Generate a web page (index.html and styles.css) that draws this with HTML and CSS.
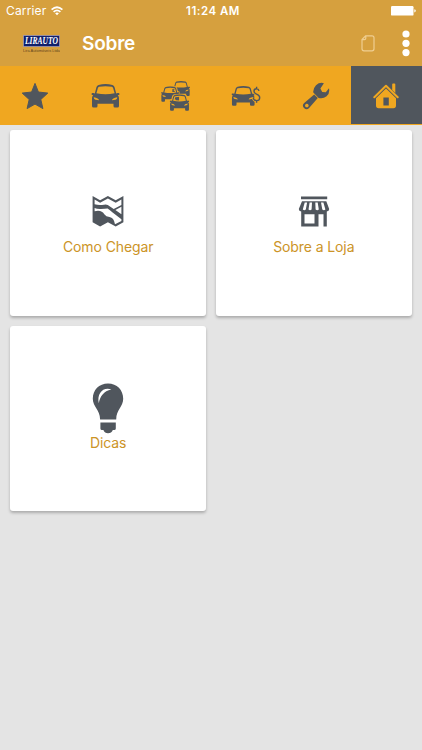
FILE: index.html
```html
<!DOCTYPE html>
<html lang="pt-BR">
<head>
<meta charset="utf-8">
<title>Sobre</title>
<link rel="stylesheet" href="styles.css">
</head>
<body>
<header class="header">
  <div class="status">
    <div class="carrier"><span class="carrier-name">Carrier</span>
      <svg class="wifi" width="12" height="10" viewBox="0 0 12 10" fill="none" stroke="#fff" stroke-width="1.7"><path d="M.6 3.7Q6-1.2 11.4 3.7M2.6 5.9Q6 2.8 9.4 5.9"/><path d="M4.1 7.3Q6 5.6 7.9 7.3L6 9.3z" fill="#fff" stroke="none"/></svg>
    </div>
    <span class="clock">11:24 AM</span>
    <div class="battery-wrap"><svg width="25" height="10" viewBox="0 0 25 10" fill="#fff"><rect width="22.5" height="9.6" rx="1.2"/><path d="M23.3 3.2q1.5.3 1.5 1.6t-1.5 1.6z"/></svg></div>
  </div>
  <div class="toolbar">
    <div class="logo"><svg class="logo-name" width="37" height="12" viewBox="0 0 37 12"><rect x=".4" y=".4" width="36.2" height="11.2" fill="#10206c" stroke="#a39bb0" stroke-width=".8"/><text x="2" y="9.3" textLength="33" lengthAdjust="spacingAndGlyphs">LIRAUTO</text></svg>
      <svg class="logo-sub" width="37" height="5" viewBox="0 0 37 5"><text x="0" y="4" textLength="37" lengthAdjust="spacingAndGlyphs">Lira Automóveis Ltda</text></svg>
    </div>
    <h1 class="title">Sobre</h1>
    <svg class="doc" width="14" height="17" viewBox="0 0 14 17" fill="none" stroke="#efce91" stroke-width="1.2"><path d="M4.6.8H11q2 0 2 2v11q0 2-2 2H3q-2 0-2-2V4.6zM4.8 1v2.2q0 1.4-1.4 1.4H1.2"/></svg>
    <svg class="dots" width="8" height="28" viewBox="0 0 8 28" fill="#fff"><circle cx="4" cy="4" r="3.6"/><circle cx="4" cy="13.3" r="3.6"/><circle cx="4" cy="22.6" r="3.6"/></svg>
  </div>
</header>

<svg class="defs" width="0" height="0">
  <symbol id="car" viewBox="0 0 28 24">
    <path fill-rule="evenodd" d="M7.1.9Q14-.7 20.9.9Q22.4 1.4 23 3L24.7 9.4Q25.2 8.8 27.2 9.1Q28.4 9.6 27.8 10.7L26.3 11.3Q27.5 12.4 27.5 14V22Q27.5 23.5 26 23.5H23.4Q22 23.5 22 22V19.8H6V22Q6 23.5 4.6 23.5H2Q.5 23.5.5 22V14Q.5 12.4 1.7 11.3L.2 10.7Q-.4 9.6.8 9.1Q2.8 8.8 3.3 9.4L5 3Q5.6 1.4 7.1.9zM7.6 2.8Q6.7 3 6.4 4L4.9 9.3Q14 11.2 23.1 9.3L21.6 4Q21.3 3 20.4 2.8Q14 1.5 7.6 2.8zM2.3 13.2Q2.2 15.5 4 15.7L7.5 16.2Q7.3 14.2 2.3 13.2zM25.7 13.2Q20.7 14.2 20.5 16.2L24 15.7Q25.8 15.5 25.7 13.2z"/>
  </symbol>
</svg>

<nav class="tabs">
  <a class="tab"><svg width="28" height="28" viewBox="0 0 28 28"><path d="M14 1.4L17.4 10L26.8 11.1L19.8 17.5L21.9 26.6L14 22.1L6.1 26.6L8.2 17.5L1.2 11.1L10.6 10z" stroke="#50565d" stroke-linejoin="round"/></svg></a>
  <a class="tab"><svg width="29" height="24"><use href="#car" width="29" height="24"/></svg></a>
  <a class="tab"><svg width="30" height="32" viewBox="0 0 30 32">
    <use href="#car" x="12" y="1" width="18" height="15.4"/>
    <g class="halo"><use href="#car" x="1" y="6.3" width="18.5" height="15.8"/></g>
    <use href="#car" x="1" y="6.3" width="18.5" height="15.8"/>
    <g class="halo"><use href="#car" x="9.7" y="14.3" width="19.6" height="16.8"/></g>
    <use href="#car" x="9.7" y="14.3" width="19.6" height="16.8"/>
  </svg></a>
  <a class="tab"><svg width="30" height="24" viewBox="0 0 30 24"><use href="#car" x=".5" y="1.9" width="23.5" height="20.2"/><path class="halo-line" d="M28 6.4Q27.5 4.5 25.5 4.5Q23 4.6 23 7Q23 9.2 25.5 10Q28.7 11 28.7 13.7Q28.6 16.6 25.7 16.6Q22.7 16.5 22.3 13.8"/><path d="M28 6.8Q27.5 4.8 25.5 4.8Q23 4.8 23 7.2Q23 9.3 25.5 10.1Q28.7 11.1 28.7 13.7Q28.6 16.6 25.7 16.6Q22.7 16.5 22.3 13.8M25.6 2.7V5M25.6 16.4V18.8" fill="none" stroke="#50565d" stroke-width="1.4"/></svg></a>
  <a class="tab"><svg width="28" height="28" viewBox="0 0 28 28"><path fill-rule="evenodd" d="M21.9 1.2L18.4 6.6L20.2 10L23.8 10.2L27 6.2Q28.1 11 24.6 14.2Q20.9 17.3 16.6 15.9L15.7 15L11.3 10.6Q10.8 6.6 14 3.2Q17.6 0 21.9 1.2zM12.2 12.4L15.8 16L7.1 25.9Q4.7 28.4 2 26Q-.4 23.2 2.2 20.9zM4.8 21.7a1.8 1.8 0 1 0 .1 0z"/></svg></a>
  <a class="tab active"><svg width="26" height="26" viewBox="0 0 26 26"><path d="M1.3 14.2L13 2.7L24.7 14.2" fill="none" stroke="#f0a720" stroke-width="2" stroke-linecap="round" stroke-linejoin="round"/><path fill-rule="evenodd" d="M19.2 1.3Q19.2.6 20 .6H21.5Q22.3.6 22.3 1.3V10L19.2 7zM13 5.4L23 15.2V22.5Q23 25.2 20.4 25.2H5.6Q3 25.2 3 22.5V15.2zM10.4 14.6V22.6H15.8V14.6z"/></svg></a>
</nav>

<main class="grid">
  <a class="card">
    <svg width="32" height="31" viewBox="0 0 32 31"><path d="M.6 0L8.1 4.3L15.9.1L23.7 4.3L31.4 0V26.2L23.7 30.6L15.9 26.2L8.1 30.6L.6 26.2z"/><path fill="#fff" d="M2.6 3.4L8.1 6.7L15.9 2.4L23.7 6.7L29.4 3.4V9L21.7 13L17.6 10.2Q15.5 8 12 8.7Q7 9.7 2.6 8.3zM29.4 10.7V18.3L23.4 13.9zM2.6 12Q5 13.2 9 13Q13 12.8 15.6 12.4Q18 13.8 20.3 16.2L29.4 23.3V25L23 28.2Q21.8 21.4 17.5 20.9Q14 20.9 12.3 18.3Q10.5 15 6 14.8L2.6 15.3z"/></svg>
    <span class="label">Como Chegar</span>
  </a>
  <a class="card">
    <svg width="32" height="31" viewBox="0 0 32 31"><path fill-rule="evenodd" d="M3 .4H29.2V3.2H3zM4 5.3H28.3L31.2 13Q31.2 15.4 28.8 15.4V30.4H25.5V18.2H20.5V30.4H3.2V15.4Q.8 15.4.8 13zM6.5 18.2V27.4H16.5V18.2z"/><path fill="#fff" d="M6.7 6.6H9.1L7.8 13.6Q6.3 14.8 4.8 13.6zM11.6 6.6H14L13.6 13.6Q12 14.8 10.5 13.6zM17.3 6.6H19.7L20.8 13.6Q19.3 14.8 17.6 13.6zM23 6.6H25.4L27.4 13.6Q26 14.8 24.3 13.6z"/></svg>
    <span class="label">Sobre a Loja</span>
  </a>
  <a class="card">
    <svg class="bulb" width="32" height="51" viewBox="0 0 32 51"><path fill-rule="evenodd" d="M16 .5C25 .5 31.2 7 31.2 15.8C31.2 24 24.2 26.6 24.2 36.4H8.1C8.1 26.6.8 24 .8 15.8C.8 7 7 .5 16 .5zM19.4 6.4C11 3.5 4.7 10.5 6.8 20.2C8 13.2 11.6 8 19.4 6.4zM8.4 39.6H23.8V45.4Q23.8 46.9 22.2 46.9H20.8Q19.5 50.2 16 50.2Q12.7 50.2 11.4 46.9H10Q8.4 46.9 8.4 45.4z"/></svg>
    <span class="label">Dicas</span>
  </a>
</main>
</body>
</html>
```
FILE: styles.css
```css
* { box-sizing: border-box; }

body {
  margin: 0;
  min-height: 750px;
  background: #e4e4e4;
  font-family: Inter, "Liberation Sans", sans-serif;
}

svg { display: block; flex: none; }
.defs { position: absolute; }

.header {
  height: 66px;
  background: #d6a03e;
  color: #fff;
}

.status {
  display: grid;
  grid-template-columns: 1fr auto 1fr;
  align-items: center;
  height: 21px;
  padding: 1px 6px 0;
  font-size: 12px;
  line-height: 20px;
}

.carrier { display: flex; align-items: center; gap: 5px; }
.carrier-name { letter-spacing: 0.15px; }
.clock { font-size: 11.5px; font-weight: 600; letter-spacing: 0.5px; padding-left: 4px; }
.battery-wrap { display: flex; justify-content: flex-end; }

.toolbar {
  display: flex;
  align-items: center;
  height: 45px;
  padding: 0 12px 0 23px;
}

.logo { width: 37px; margin-right: 22px; padding-top: 1px; }

.logo-name {
  font: italic bold 9.5px "Liberation Serif", serif;
  fill: #fff;
}

.logo-sub {
  margin-top: 1px;
  font: 4px "Liberation Sans", sans-serif;
  fill: #65451c;
}

.title {
  margin: 0;
  font-size: 19px;
  font-weight: 600;
  line-height: 24px;
  letter-spacing: -0.2px;
}

.doc { margin-left: auto; margin-right: 27px; }

.tabs {
  display: grid;
  grid-template-columns: repeat(5, 70.2px) 1fr;
  height: 59px;
  padding-bottom: 1px;
  background: #f0a720;
}

.tab {
  display: flex;
  align-items: center;
  justify-content: center;
  padding-top: 2px;
  fill: #50565d;
}

.active { background: #50565d; fill: #f0a720; }
.halo { fill: #f0a720; stroke: #f0a720; stroke-width: 3px; }
.halo-line { fill: none; stroke: #f0a720; stroke-width: 3px; }

.grid {
  display: grid;
  grid-template-columns: 1fr 1fr;
  grid-auto-rows: 185.6px;
  gap: 10px;
  padding: 5px 10.4px;
}

.card {
  display: flex;
  flex-direction: column;
  align-items: center;
  padding-top: 66px;
  background: #fff;
  border-radius: 3px;
  box-shadow: 0 2px 3px rgba(0, 0, 0, 0.25);
  fill: #50565d;
}

.label {
  margin-top: 10px;
  color: #cc9427;
  font-size: 14px;
  line-height: 20px;
  letter-spacing: -0.1px;
}

.bulb { margin-top: -9px; }
.bulb + .label { margin-top: -1px; }
```
